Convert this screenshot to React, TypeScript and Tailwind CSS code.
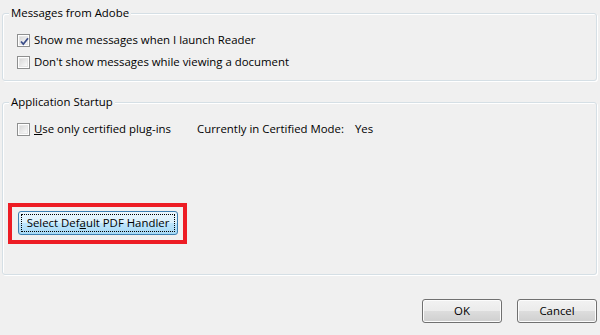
import type { ReactNode } from 'react';

function CheckBox({ checked = false }: { checked?: boolean }) {
    return (
        <span className="relative flex h-[13px] w-[13px] shrink-0 items-center justify-center border border-[#8e8f8f] bg-white">
            <span className="h-[9px] w-[9px] border border-[#e6e6e6] bg-gradient-to-br from-[#d9d9d9] to-[#f9f9f9]" />
            {checked && (
                <svg width="11" height="11" viewBox="0 0 11 11" className="absolute left-px top-px">
                    <path d="M2 5.5 L4.3 8.2 L9 2.2" fill="none" stroke="#3d4f8a" strokeWidth="1.8" />
                </svg>
            )}
        </span>
    );
}

function Row({ checked, children }: { checked?: boolean; children: ReactNode }) {
    return (
        <div className="flex h-[22px] items-center gap-[4px]">
            <CheckBox checked={checked} />
            {children}
        </div>
    );
}

function Group({ title, className, children }: { title: string; className: string; children: ReactNode }) {
    return (
        <div className={`relative rounded-[3px] border border-[#d5dfe5] shadow-[inset_1px_1px_0_#fff,1px_1px_0_#fff] ${className}`}>
            {/* legend sits on top of the border line */}
            <span className="absolute -top-[9px] left-[6px] bg-[#f0f0f0] px-[2px] leading-[16px]">{title}</span>
            {children}
        </div>
    );
}

function Button({ children, focused = false, width }: { children: ReactNode; focused?: boolean; width: string }) {
    if (focused) {
        return (
            <div className={`flex h-[24px] ${width} rounded-[3px] border border-[#3c7fb1] bg-[linear-gradient(#eaf6fd_0%,#d9f0fc_50%,#bee6fd_50%,#a7d9f5_100%)] p-[2px]`}>
                <div className="flex flex-1 items-center justify-center whitespace-nowrap border border-dotted border-black">{children}</div>
            </div>
        );
    }
    return (
        <div className={`flex h-[24px] ${width} items-center justify-center rounded-[3px] border border-[#707070] bg-[linear-gradient(#f2f2f2_0%,#ebebeb_50%,#dddddd_50%,#cfcfcf_100%)] shadow-[inset_0_0_0_1px_#fcfcfc]`}>
            {children}
        </div>
    );
}

export default function App() {
    return (
        <div className="flex h-[335px] w-[600px] flex-col bg-[#f0f0f0] pl-[2px] pr-[3px] pt-[13px] font-['Open_Sans',sans-serif] text-[11.4px] text-black">
            <Group title="Messages from Adobe" className="h-[68px] pl-[14px] pt-[15px]">
                <Row checked>Show me messages when I launch Reader</Row>
                <Row>Don't show messages while viewing a document</Row>
            </Group>

            <Group title="Application Startup" className="mt-[21px] h-[173px] pt-[15px]">
                <div className="pl-[14px]">
                    <Row>
                        <span className="w-[159px]">
                            <span className="underline">U</span>se only certified plug-ins
                        </span>
                        <span className="w-[154px]">Currently in Certified Mode:</span>
                        <span>Yes</span>
                    </Row>
                </div>
                {/* red highlight around the handler button */}
                <div className="ml-[5px] mt-[63px] w-[179px] border-4 border-[#ed1c24] pb-[5px] pl-[6px] pr-[5px] pt-[4px]">
                    <Button focused width="w-[160px]">
                        <span>
                            Select Def<span className="underline">a</span>ult PDF Handler
                        </span>
                    </Button>
                </div>
            </Group>

            <div className="mt-[24px] flex justify-end gap-[15px]">
                <Button width="w-[80px]">OK</Button>
                <Button width="w-[80px]">Cancel</Button>
            </div>
        </div>
    );
}
